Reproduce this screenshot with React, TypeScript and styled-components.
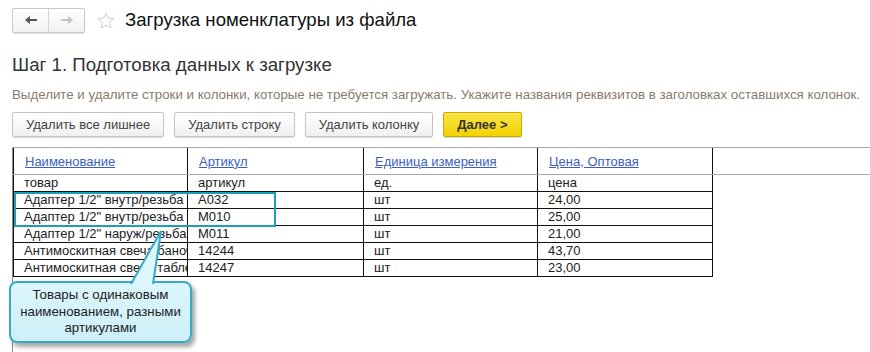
import React from 'react';
import styled, { createGlobalStyle } from 'styled-components';

const GlobalStyle = createGlobalStyle`
  html, body {
    margin: 0;
    padding: 0;
    background: #fff;
    font-family: "Liberation Sans", Arial, sans-serif;
  }
`;

const columns = ['Наименование', 'Артикул', 'Единица измерения', 'Цена, Оптовая'];
const widths = [174, 176, 174, 175];

const rows = [
  ['товар', 'артикул', 'ед.', 'цена'],
  ['Адаптер 1/2" внутр/резьба', 'A032', 'шт', '24,00'],
  ['Адаптер 1/2" внутр/резьба', 'M010', 'шт', '25,00'],
  ['Адаптер 1/2" наруж/резьба', 'M011', 'шт', '21,00'],
  ['Антимоскитная свеча баночка', '14244', 'шт', '43,70'],
  ['Антимоскитная свеча таблетка', '14247', 'шт', '23,00'],
];

const Page = styled.div`
  width: 870px;
  height: 352px;
  overflow: hidden;
  padding-left: 12px;
  box-sizing: border-box;
`;

const TopBar = styled.div`
  display: flex;
  align-items: center;
  height: 26px;
  margin-top: 7px;
`;

const NavGroup = styled.div`
  display: flex;
  width: 73px;
  height: 25px;
  box-sizing: border-box;
  border: 1px solid #c8c8c8;
  border-radius: 2px;
  background: linear-gradient(#ffffff, #f1f1f1);
  box-shadow: 0 1px 1px rgba(0, 0, 0, 0.12);
`;

const NavButton = styled.div<{ last?: boolean }>`
  flex: 1;
  display: flex;
  align-items: center;
  justify-content: center;
  border-left: ${(p) => (p.last ? '1px solid #d4d4d4' : 'none')};
`;

const Star = styled.div`
  display: flex;
  margin-left: 12px;
  margin-right: 10px;
`;

const Title = styled.div`
  font-size: 18.6px;
  color: #111;
`;

const StepTitle = styled.div`
  font-size: 18.7px;
  color: #333;
  margin-top: 21px;
`;

const Hint = styled.div`
  font-size: 13.3px;
  color: #8a7b6c;
  margin-top: 11px;
  white-space: nowrap;
`;

const ButtonRow = styled.div`
  display: flex;
  gap: 10px;
  margin-top: 10px;
`;

const Button = styled.div<{ primary?: boolean }>`
  height: 25px;
  box-sizing: border-box;
  padding: 0 13px;
  display: flex;
  align-items: center;
  font-size: 13px;
  border-radius: 2px;
  color: ${(p) => (p.primary ? '#333' : '#444')};
  font-weight: ${(p) => (p.primary ? 'bold' : 'normal')};
  border: 1px solid ${(p) => (p.primary ? '#c9a900' : '#c4c4c4')};
  background: ${(p) =>
    p.primary ? 'linear-gradient(#fbe44a, #f2d200)' : 'linear-gradient(#ffffff, #f0f0f0)'};
  box-shadow: 0 1px 1px rgba(0, 0, 0, 0.15);
`;

const GridWrap = styled.div`
  position: relative;
  margin-top: 10px;
  height: 205px;
  border-top: 1px solid #a8a8a8;
  border-left: 1px solid #8c8c8c;
`;

const Table = styled.table`
  border-collapse: collapse;
  table-layout: fixed;
  width: 100%;
  font-size: 13px;
`;

const HeadCell = styled.th<{ filler?: boolean }>`
  height: 26px;
  padding: 0 0 0 11px;
  text-align: left;
  font-weight: normal;
  border-left: ${(p) => (p.filler ? 'none' : '1px solid #111')};
  border-right: ${(p) => (p.filler ? 'none' : '1px solid #111')};
  border-bottom: 1px solid #a8a8a8;
  color: #3b5fc0;
  text-decoration: underline;
  white-space: nowrap;
  overflow: hidden;
`;

const Cell = styled.td<{ filler?: boolean }>`
  height: 16px;
  padding: 0 0 0 10px;
  line-height: 16px;
  color: #222;
  border: ${(p) => (p.filler ? 'none' : '1px solid #111')};
  white-space: nowrap;
  overflow: hidden;
`;

const Highlight = styled.div`
  position: absolute;
  left: 1px;
  top: 44px;
  width: 262px;
  height: 35px;
  box-sizing: border-box;
  border: 2px solid #1b9fba;
`;

const Callout = styled.div`
  position: absolute;
  left: -4px;
  top: 133px;
  width: 183px;
  height: 62px;
  box-sizing: border-box;
  border: 2px solid #36a9c4;
  border-radius: 8px;
  background: linear-gradient(#dcf6fc, #cdeff8);
  box-shadow: 3px 4px 4px rgba(0, 0, 0, 0.35);
  display: flex;
  align-items: center;
  justify-content: center;
  text-align: center;
  font-size: 13.3px;
  line-height: 16.5px;
  color: #222;
`;

const Tail = styled.svg`
  position: absolute;
  left: 116px;
  top: -54px;
  overflow: visible;
`;

const App = () => {
  return (
    <>
      <GlobalStyle />
      <Page>
        <TopBar>
          <NavGroup>
            <NavButton>
              <svg width="14" height="10" viewBox="0 0 14 10">
                <path d="M1 5 L6 1 L6 4 L13 4 L13 6 L6 6 L6 9 Z" fill="#555" />
              </svg>
            </NavButton>
            <NavButton last>
              <svg width="14" height="10" viewBox="0 0 14 10">
                <path d="M13 5 L8 1 L8 4 L1 4 L1 6 L8 6 L8 9 Z" fill="#c4c4c4" />
              </svg>
            </NavButton>
          </NavGroup>
          <Star>
            <svg width="18" height="17" viewBox="0 0 18 17">
              <path
                d="M9 1 L11.3 6.2 L17 6.6 L12.6 10.3 L14 16 L9 13 L4 16 L5.4 10.3 L1 6.6 L6.7 6.2 Z"
                fill="none"
                stroke="#cfcfcf"
                strokeWidth="1"
                strokeLinejoin="round"
              />
            </svg>
          </Star>
          <Title>Загрузка номенклатуры из файла</Title>
        </TopBar>
        <StepTitle>Шаг 1. Подготовка данных к загрузке</StepTitle>
        <Hint>
          Выделите и удалите строки и колонки, которые не требуется загружать. Укажите названия
          реквизитов в заголовках оставшихся колонок.
        </Hint>
        <ButtonRow>
          <Button>Удалить все лишнее</Button>
          <Button>Удалить строку</Button>
          <Button>Удалить колонку</Button>
          <Button primary>Далее &gt;</Button>
        </ButtonRow>
        <GridWrap>
          <Table>
            <colgroup>
              {widths.map((w, i) => (
                <col key={i} style={{ width: w }} />
              ))}
              <col />
            </colgroup>
            <thead>
              <tr>
                {columns.map((c) => (
                  <HeadCell key={c}>{c}</HeadCell>
                ))}
                <HeadCell filler />
              </tr>
            </thead>
            <tbody>
              {rows.map((r, i) => (
                <tr key={i}>
                  {r.map((v, j) => (
                    <Cell key={j}>{v}</Cell>
                  ))}
                  <Cell filler />
                </tr>
              ))}
            </tbody>
          </Table>
          <Highlight />
          <Callout>
            <Tail width="34" height="56" viewBox="0 0 34 56">
              <path d="M4 56 L34 2 L26 56 Z" fill="#dcf6fc" />
              <path d="M4 55 L34 2 L26 55" fill="none" stroke="#36a9c4" strokeWidth="2" />
            </Tail>
            Товары с одинаковым
            <br />
            наименованием, разными
            <br />
            артикулами
          </Callout>
        </GridWrap>
      </Page>
    </>
  );
};

export default App;
